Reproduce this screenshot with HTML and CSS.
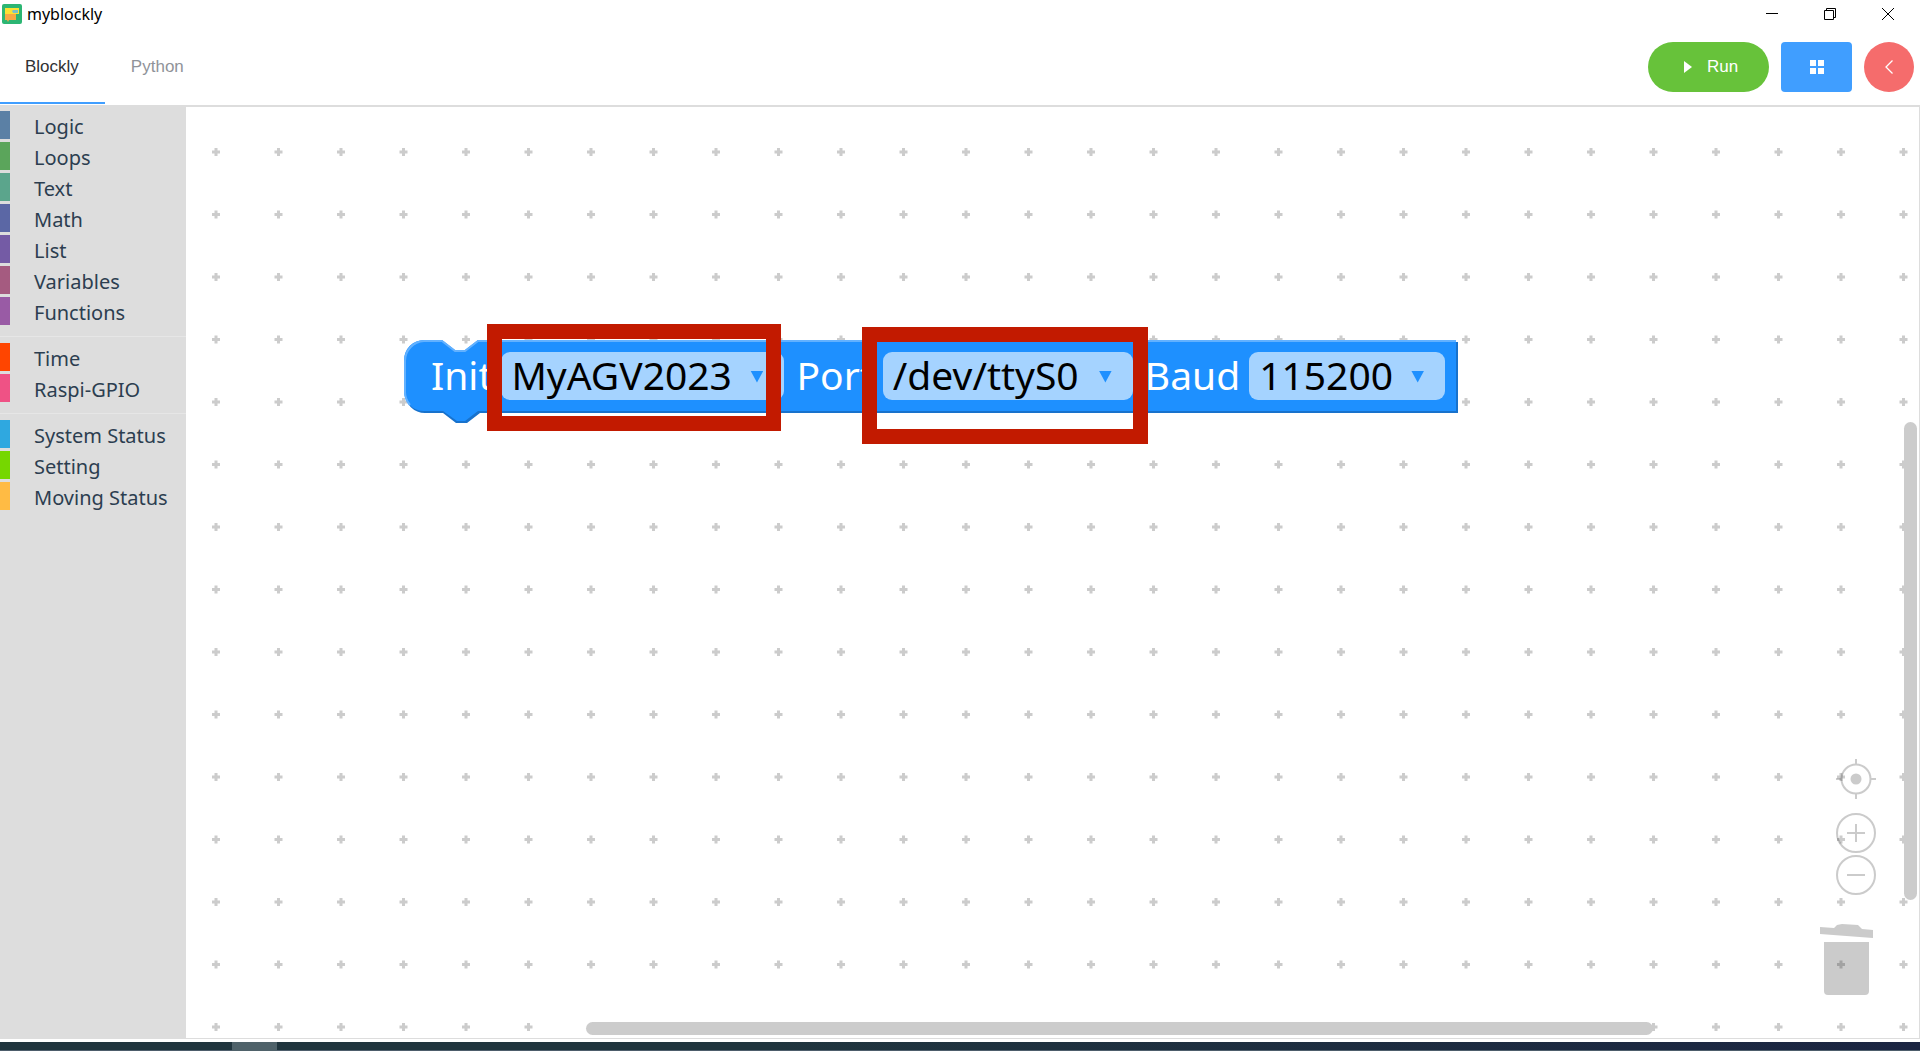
FILE: index.html
```html
<!DOCTYPE html>
<html lang="en">
<head>
<meta charset="utf-8">
<title>myblockly</title>
<link rel="stylesheet" href="styles.css">
</head>
<body>
<div class="window">
  <header class="titlebar">
    <svg class="app-icon" width="20" height="20" viewBox="0 0 20 20" aria-hidden="true">
      <rect width="20" height="20" rx="2" fill="#2cb673"/>
      <path d="M3 4h14v6H3z" fill="#fbe233"/>
      <path d="M3 10h11v6H7l-1 2-1-2H3z" fill="#f6a944"/>
      <path d="M10 7l1-1h5v3h-5z" fill="#79bfc9"/>
    </svg>
    <span class="app-name">myblockly</span>
    <div class="window-buttons">
      <button type="button" aria-label="Minimize"><svg width="12" height="12" viewBox="0 0 12 12"><path d="M0 5.5h12"/></svg></button>
      <button type="button" aria-label="Restore"><svg width="12" height="12" viewBox="0 0 12 12"><path d="M.5 2.5h9v9h-9zM2.500 2.500v-2h9v9h-2"/></svg></button>
      <button type="button" aria-label="Close"><svg width="12" height="12" viewBox="0 0 12 12"><path d="M0 0l12 12M12 0L0 12"/></svg></button>
    </div>
  </header>

  <div class="toolbar">
    <nav class="tabs">
      <a class="tab active" href="#blockly">Blockly</a>
      <a class="tab" href="#python">Python</a>
    </nav>
    <div class="actions">
      <button type="button" class="action run">
        <svg width="8" height="12" viewBox="0 0 8 12" aria-hidden="true"><path d="M0 0l8 6-8 6z" fill="#fff"/></svg>
        Run
      </button>
      <button type="button" class="action apps" aria-label="Menu">
        <svg width="16" height="16" viewBox="0 0 16 16" aria-hidden="true"><path d="M1 1h6v6H1zM9 1h6v6H9zM1 9h6v6H1zM9 9h6v6H9z" fill="#fff"/></svg>
      </button>
      <button type="button" class="action collapse" aria-label="Collapse">
        <svg width="8" height="14" viewBox="0 0 8 14" aria-hidden="true"><path d="M7.500.500L1 7l6.500 6.500" fill="none" stroke="#fff" stroke-width="1.300"/></svg>
      </button>
    </div>
  </div>

  <main class="editor" id="blockly">
    <aside class="toolbox">
      <ul class="group">
        <li class="category logic">Logic</li>
        <li class="category loops">Loops</li>
        <li class="category text">Text</li>
        <li class="category math">Math</li>
        <li class="category list">List</li>
        <li class="category variables">Variables</li>
        <li class="category functions">Functions</li>
      </ul>
      <ul class="group">
        <li class="category time">Time</li>
        <li class="category gpio">Raspi-GPIO</li>
      </ul>
      <ul class="group">
        <li class="category system">System Status</li>
        <li class="category setting">Setting</li>
        <li class="category moving">Moving Status</li>
      </ul>
    </aside>

    <section class="workspace">
      <svg class="grid" aria-hidden="true">
        <defs>
          <pattern id="dots" x="-1" y="14" width="125" height="125" patternUnits="userSpaceOnUse">
            <path d="M27 31h8M31 27v8M89.500 31h8M93.500 27v8M27 93.500h8M31 89.500v8M89.500 93.500h8M93.500 89.500v8" stroke="#ccc" stroke-width="3"/>
          </pattern>
        </defs>
        <rect width="100%" height="100%" fill="url(#dots)"/>
      </svg>

      <form class="block">
        <svg class="block-shape" width="1054" height="84" viewBox="0 0 1054 84" aria-hidden="true">
          <path d="M21 2H39L52 12H62L75 2H1054V73H76L63 83H52L39 73H21A20 20 0 0 1 1 53V22A20 20 0 0 1 21 2z" fill="#1872cc"/>
          <path d="M20 0H38L51 10H61L74 0H1052V71H74L61 81H53L39 71H20A20 20 0 0 1 0 51V20A20 20 0 0 1 20 0z" fill="#1e90ff"/>
          <path d="M6 65A20 20 0 0 1 1 51V21A20 20 0 0 1 20 1H38L51 11H61L74 1H1052" fill="none" stroke="#62b1ff" stroke-width="2"/>
        </svg>
        <label for="model">Init</label>
        <span class="field model"><select id="model"><option>MyAGV2023</option></select></span>
        <label for="port">Port</label>
        <span class="field port"><select id="port"><option>/dev/ttyS0</option></select></span>
        <label for="baud">Baud</label>
        <span class="field baud"><select id="baud"><option>115200</option></select></span>
      </form>
      <div class="marker marker-model"></div>
      <div class="marker marker-port"></div>

      <div class="controls">
        <button type="button" aria-label="Center">
          <svg width="40" height="40" viewBox="0 0 40 40"><circle cx="20" cy="20" r="14.500"/><circle cx="20" cy="20" r="5.500" fill="#000" stroke="none"/><path d="M20 0v5M20 35v5M0 20h5M35 20h5"/></svg>
        </button>
        <div class="zoom">
          <button type="button" aria-label="Zoom in"><svg width="40" height="40" viewBox="0 0 40 40"><circle cx="20" cy="20" r="19"/><path d="M11 20h18M20 11v18"/></svg></button>
          <button type="button" aria-label="Zoom out"><svg width="40" height="40" viewBox="0 0 40 40"><circle cx="20" cy="20" r="19"/><path d="M11 20h18"/></svg></button>
        </div>
        <button type="button" class="trash" aria-label="Trash">
          <svg width="54" height="71" viewBox="0 0 54 71"><path d="M0 3l14 1 3-3 5-1 16 1 4 4 11 1v8L0 10zM4 18h45v49a4 4 0 0 1-4 4H8a4 4 0 0 1-4-4z" fill="#000" stroke="none"/></svg>
        </button>
      </div>
      <div class="scroll vertical"></div>
      <div class="scroll horizontal"></div>
    </section>
  </main>
</div>
<footer class="taskbar"><div class="task"></div></footer>
</body>
</html>
```
FILE: styles.css
```css
* {
  box-sizing: border-box;
}

body {
  margin: 0;
  min-height: 100vh;
  display: flex;
  flex-direction: column;
  background: #fff;
  font-family: "Noto Sans", "Open Sans", sans-serif;
}

button {
  padding: 0;
  border: 0;
  background: none;
  display: flex;
  align-items: center;
  justify-content: center;
}

.window {
  flex: 1;
  display: flex;
  flex-direction: column;
  padding-bottom: 3px;
}

/* Title bar */
.titlebar {
  display: flex;
  align-items: center;
  gap: 5px;
  height: 28px;
  padding: 0 3px 0 2px;
  font-size: 16px;
  line-height: 28px;
  color: #000;
}

.window-buttons {
  display: flex;
  margin-left: auto;
}

.window-buttons button {
  width: 58px;
  height: 28px;
}

.window-buttons svg {
  fill: none;
  stroke: #000;
}

/* Tabs and action buttons */
.toolbar {
  display: flex;
  justify-content: space-between;
  height: 79px;
  border-bottom: 2px solid #ddd;
  font-family: "Liberation Sans", Arial, sans-serif;
  font-size: 17px;
}

.tabs {
  display: flex;
  gap: 1px;
}

.tab {
  height: 76px;
  padding: 0 26px 0 25px;
  line-height: 77px;
  color: #909399;
  text-decoration: none;
}

.tab.active {
  color: #303133;
  border-bottom: 2px solid #409eff;
}

.actions {
  display: flex;
  gap: 12px;
  padding: 14px 6px 0 0;
}

.action {
  height: 50px;
  color: #fff;
  font: inherit;
}

.run {
  width: 121px;
  gap: 15px;
  padding-left: 5px;
  border-radius: 25px;
  background: #67c23a;
}

.apps {
  width: 71px;
  border-radius: 4px;
  background: #409eff;
}

.collapse {
  width: 50px;
  border-radius: 50%;
  background: #f56c6c;
}

/* Editor */
.editor {
  flex: 1;
  display: flex;
}

.toolbox {
  width: 186px;
  padding-top: 4px;
  background: #ddd;
}

.group {
  margin: 0;
  padding: 0 0 11px;
  display: flex;
  flex-direction: column;
  gap: 3px;
  list-style: none;
}

.group + .group {
  padding-top: 6px;
  border-top: 1px solid #e6e6e6;
}

.category {
  height: 28px;
  padding-left: 24px;
  border-left: 10px solid;
  font-size: 20px;
  line-height: 32px;
  color: #2c3e50;
  white-space: nowrap;
}

.logic { border-color: #5b80a5; }
.loops { border-color: #5ba55b; }
.text { border-color: #5ba58c; }
.math { border-color: #5b67a5; }
.list { border-color: #745ba5; }
.variables { border-color: #a55b80; }
.functions { border-color: #995ba5; }
.time { border-color: #ff4500; }
.gpio { border-color: #ef5285; }
.system { border-color: #2fa8e0; }
.setting { border-color: #76d700; }
.moving { border-color: #ffbb44; }

.workspace {
  flex: 1;
  position: relative;
  overflow: hidden;
  border-right: 1px solid #ddd;
  border-bottom: 1px solid #ddd;
}

.grid {
  position: absolute;
  width: 100%;
  height: 100%;
}

/* Block on the canvas */
.block {
  position: absolute;
  left: 218px;
  top: 233px;
  display: flex;
  align-items: center;
  gap: 10px;
  height: 71px;
  padding-left: 25px;
  font-size: 39px;
  line-height: 46px;
  color: #fff;
}

.block-shape {
  position: absolute;
  left: 0;
  top: 0;
}

.block label {
  position: relative;
  margin: 0 -1px 0 2px;
  padding-bottom: 2px;
}

.field {
  position: relative;
  height: 48px;
  border-radius: 9px;
  background: #a5d3ff;
}

.field::after {
  content: "";
  position: absolute;
  right: 21px;
  top: 19px;
  width: 13px;
  height: 12px;
  background: #1e90ff;
  clip-path: polygon(0 0, 100% 0, 50% 100%);
  pointer-events: none;
}

/* Taller than the field, so that descenders are not cut off */
.field select {
  display: block;
  width: 100%;
  height: 56px;
  margin: -5px 0 -3px;
  padding: 0 10px;
  border: 0;
  appearance: none;
  background: none;
  color: #000;
  font: inherit;
  line-height: 56px;
}

.model { width: 283px; }
.port { width: 250px; }
.baud { width: 196px; }

/* Highlight frames */
.marker {
  position: absolute;
  border: 15px solid #c21a00;
}

.marker-model {
  left: 301px;
  top: 217px;
  width: 294px;
  height: 107px;
}

.marker-port {
  left: 676px;
  top: 220px;
  width: 286px;
  height: 117px;
}

/* Canvas controls */
.controls {
  position: absolute;
  right: 43px;
  bottom: 43px;
  display: flex;
  flex-direction: column;
  align-items: flex-end;
  opacity: 0.2;
}

.controls svg {
  fill: none;
  stroke: #000;
  stroke-width: 2;
}

.zoom {
  display: flex;
  flex-direction: column;
  gap: 2px;
  margin: 14px 0 29px;
}

.trash {
  margin-right: 2px;
}

.scroll {
  position: absolute;
  border-radius: 7px;
  background: #ccc;
}

.vertical {
  right: 2px;
  top: 315px;
  bottom: 138px;
  width: 13px;
}

.horizontal {
  left: 400px;
  right: 266px;
  bottom: 3px;
  height: 13px;
}

.taskbar {
  height: 9px;
  padding-left: 232px;
  border-bottom: 1px solid #4d5d6b;
  background: linear-gradient(90deg, #20353e 40%, #1b2542);
}

.task {
  width: 45px;
  height: 9px;
  background: #4f626a;
}
```
